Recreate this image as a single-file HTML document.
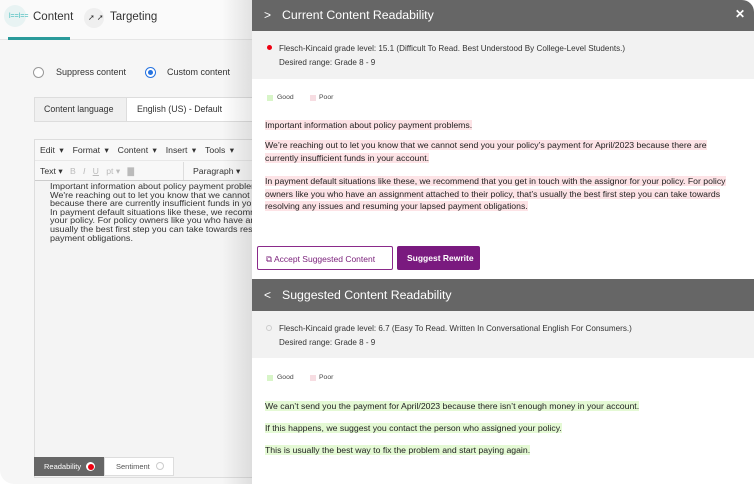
<!DOCTYPE html>
<html><head><style>
*{margin:0;padding:0;box-sizing:border-box}
body{width:754px;height:489px;overflow:hidden;background:#fff;font-family:"Liberation Sans",sans-serif;position:relative}
.a{position:absolute}
#left{left:0;top:0;width:300px;height:484px;background:#f6f6f6;border-radius:0 0 0 14px}
.t{font-size:11px;color:#333}
.hl{background:#fde3e6;}
.gl{background:#e4f9d4;}
.p{font-size:8.7px;color:#222;line-height:16px}
</style></head><body>
<div class="a" id="left"></div>
<div class="a" style="left:0;top:0;width:300px;height:40px;background:#fafafa;border-bottom:1px solid #e6e6e6"></div>
<div class="a" style="left:4px;top:5px;width:22px;height:22px;border-radius:50%;background:#e8f3f3"></div>
<div class="a" style="left:9px;top:13px;font-size:7px;color:#4bb;">l==l==</div>
<div class="a t" style="left:33px;top:11px;font-size:11.5px">Content</div>
<div class="a" style="left:84px;top:8px;width:20px;height:20px;border-radius:50%;background:#efefef"></div>
<div class="a" style="left:88px;top:13px;font-size:8px;color:#333">➚ ➚</div>
<div class="a t" style="left:110px;top:11px;font-size:11.5px">Targeting</div>
<div class="a" style="left:8px;top:37px;width:62px;height:3px;background:#2a9a9a"></div>
<div class="a" style="left:33px;top:67px;width:11px;height:11px;border:1px solid #999;border-radius:50%;background:#fff"></div>
<div class="a t" style="left:56px;top:67px;font-size:9px">Suppress content</div>
<div class="a" style="left:145px;top:67px;width:11px;height:11px;border:1px solid #2673e0;border-radius:50%;background:#fff"><div style="margin:2px;width:5px;height:5px;border-radius:50%;background:#2673e0"></div></div>
<div class="a t" style="left:167px;top:67px;font-size:9px">Custom content</div>
<div class="a" style="left:34px;top:97px;width:230px;height:25px;border:1px solid #ddd;background:#fff"></div>
<div class="a" style="left:34px;top:97px;width:93px;height:25px;border:1px solid #ddd;background:#f0f0f0"></div>
<div class="a t" style="left:44px;top:104px;font-size:8.8px">Content language</div>
<div class="a t" style="left:137px;top:104px;font-size:8.8px">English (US) - Default</div>
<div class="a" style="left:34px;top:139px;width:230px;height:339px;border:1px solid #ddd;background:#f4f4f4"></div>
<div class="a" style="left:35px;top:140px;width:229px;height:41px;background:#f8f8f8;border-bottom:1px solid #ccc"></div>
<div class="a" style="left:35px;top:160px;width:229px;height:1px;background:#e8e8e8"></div>
<div class="a t" style="left:40px;top:145px;font-size:8.7px;word-spacing:2px">Edit ▾ &nbsp;Format ▾ &nbsp;Content ▾ &nbsp;Insert ▾ &nbsp;Tools ▾</div>
<div class="a t" style="left:40px;top:166px;font-size:8.7px">Text ▾ <span style="color:#bbb">&nbsp;&nbsp;B &nbsp;&nbsp;<i>I</i> &nbsp;&nbsp;<u>U</u> &nbsp;&nbsp;pt ▾ &nbsp;&nbsp;▇</span></div>
<div class="a" style="left:183px;top:162px;width:1px;height:18px;background:#ddd"></div>
<div class="a t" style="left:193px;top:166px;font-size:8.7px">Paragraph ▾</div>
<div class="a" style="left:50px;top:182px;font-size:8.4px;line-height:8.6px;color:#333;white-space:nowrap;transform:scaleX(1.08);transform-origin:left">Important information about policy payment problems.<br>We're reaching out to let you know that we cannot send<br>because there are currently insufficient funds in your acc<br>In payment default situations like these, we recommend<br>your policy. For policy owners like you who have an assig<br>usually the best first step you can take towards resolving<br>payment obligations.</div>
<div class="a" style="left:34px;top:457px;width:70px;height:19px;background:#666"></div>
<div class="a" style="left:44px;top:462px;font-size:7.5px;color:#fff">Readability</div>
<div class="a" style="left:86px;top:462px;width:9px;height:9px;border-radius:50%;background:#fff"><div style="margin:1.5px;width:6px;height:6px;border-radius:50%;background:#e01"></div></div>
<div class="a" style="left:104px;top:457px;width:70px;height:19px;background:#fff;border:1px solid #ddd"></div>
<div class="a" style="left:116px;top:462px;font-size:7.5px;color:#555">Sentiment</div>
<div class="a" style="left:156px;top:462px;width:8px;height:8px;border-radius:50%;border:1px solid #ccc"></div>
<div class="a" style="left:222px;top:0;width:32px;height:484px;background:linear-gradient(90deg,rgba(0,0,0,0),rgba(0,0,0,.1))"></div>

<div class="a" style="left:252px;top:0;width:502px;height:489px;background:#fff;border-radius:0 12px 0 0;overflow:hidden">
 <div class="a" style="left:0;top:0;width:502px;height:31px;background:#666"></div>
 <div class="a" style="left:12px;top:8px;color:#fff;font-size:12px">&gt;</div>
 <div class="a" style="left:30px;top:8px;color:#fff;font-size:12.3px">Current Content Readability</div>
 <div class="a" style="left:483px;top:7px;color:#fff;font-size:12px;font-weight:bold">✕</div>
 <div class="a" style="left:0;top:31px;width:502px;height:48px;background:#f2f2f2"></div>
 <div class="a" style="left:15px;top:45px;width:5px;height:5px;border-radius:50%;background:#e01"></div>
 <div class="a" style="left:27px;top:42px;font-size:8.1px;color:#333;line-height:14px">Flesch-Kincaid grade level: 15.1 (Difficult To Read. Best Understood By College-Level Students.)<br>Desired range: Grade 8 - 9</div>
 <div class="a" style="left:15px;top:95px;width:6px;height:6px;background:#d8f5c8"></div>
 <div class="a" style="left:25px;top:94px;font-size:6.8px;color:#444">Good</div>
 <div class="a" style="left:58px;top:95px;width:6px;height:6px;background:#f7dde2"></div>
 <div class="a" style="left:67px;top:94px;font-size:6.8px;color:#444">Poor</div>
 <div class="a p" style="left:13px;top:117px;width:470px"><span class="hl">Important information about policy payment problems.</span></div>
 <div class="a p" style="left:13px;top:139px;width:470px;line-height:12.5px"><span class="hl">We’re reaching out to let you know that we cannot send you your policy’s payment for April/2023 because there are currently insufficient funds in your account.</span></div>
 <div class="a p" style="left:13px;top:175px;width:484px;line-height:12.7px"><span class="hl">In payment default situations like these, we recommend that you get in touch with the assignor for your policy. For policy owners like you who have an assignment attached to their policy, that’s usually the best first step you can take towards resolving any issues and resuming your lapsed payment obligations.</span></div>
 <div class="a" style="left:5px;top:246px;width:136px;height:24px;border:1px solid #8a2a8a;border-radius:2px;color:#7a1f7a;font-size:8.5px;padding:7px 0 0 8px">⧉ Accept Suggested Content</div>
 <div class="a" style="left:145px;top:246px;width:83px;height:24px;background:#7a1a7f;border-radius:2px;color:#fff;font-size:8.5px;font-weight:bold;padding:7px 0 0 10px">Suggest Rewrite</div>
 <div class="a" style="left:0;top:279px;width:502px;height:32px;background:#666"></div>
 <div class="a" style="left:12px;top:288px;color:#fff;font-size:12px">&lt;</div>
 <div class="a" style="left:30px;top:288px;color:#fff;font-size:12.3px">Suggested Content Readability</div>
 <div class="a" style="left:0;top:311px;width:502px;height:47px;background:#f2f2f2"></div>
 <div class="a" style="left:14px;top:325px;width:6px;height:6px;border-radius:50%;border:1px solid #ccc"></div>
 <div class="a" style="left:27px;top:322px;font-size:8.1px;color:#333;line-height:14px">Flesch-Kincaid grade level: 6.7 (Easy To Read. Written In Conversational English For Consumers.)<br>Desired range: Grade 8 - 9</div>
 <div class="a" style="left:15px;top:375px;width:6px;height:6px;background:#d8f5c8"></div>
 <div class="a" style="left:25px;top:374px;font-size:6.8px;color:#444">Good</div>
 <div class="a" style="left:58px;top:375px;width:6px;height:6px;background:#f7dde2"></div>
 <div class="a" style="left:67px;top:374px;font-size:6.8px;color:#444">Poor</div>
 <div class="a p" style="left:13px;top:398px"><span class="gl">We can’t send you the payment for April/2023 because there isn’t enough money in your account.</span></div>
 <div class="a p" style="left:13px;top:420px"><span class="gl">If this happens, we suggest you contact the person who assigned your policy.</span></div>
 <div class="a p" style="left:13px;top:442px"><span class="gl">This is usually the best way to fix the problem and start paying again.</span></div>
</div>
</body></html>
